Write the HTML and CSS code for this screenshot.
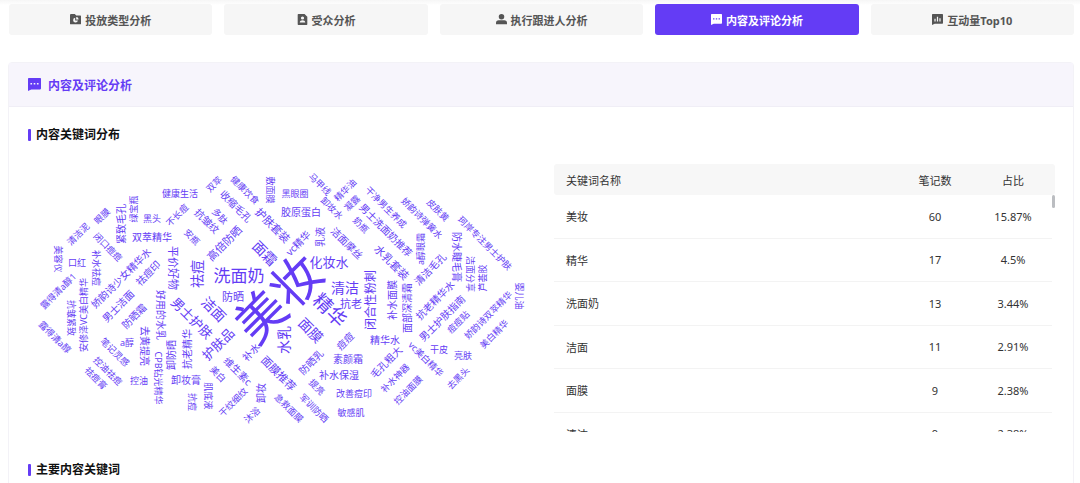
FILE: index.html
```html
<!DOCTYPE html>
<html lang="zh-CN">
<head>
    <meta charset="UTF-8">
    <meta name="viewport" content="width=device-width, initial-scale=1.0">
    <title>内容及评论分析</title>
    <link rel="stylesheet" href="styles.css">
</head>
<body>
    <nav class="tabs">
        <button class="tab" type="button">
            <svg class="tab-icon" viewBox="0 0 16 16"><path fill-rule="evenodd" d="M1.500 0H7l2 2h6a1 1 0 0 1 1 1v11a1 1 0 0 1-1 1H1a1 1 0 0 1-1-1V1.500A1.500 1.500 0 0 1 1.500 0zM7.500 5.500a3.500 3.500 0 1 0 4 4h-4zM9 4.500V8h3.500A3.500 3.500 0 0 0 9 4.500z"/></svg>
            投放类型分析
        </button>
        <button class="tab" type="button">
            <svg class="tab-icon" viewBox="0 0 16 16"><path fill-rule="evenodd" d="M2 0h9l4 4v11a1 1 0 0 1-1 1H2a1 1 0 0 1-1-1V1a1 1 0 0 1 1-1zM8 3.500a2.300 2.300 0 1 0 0 4.600 2.300 2.300 0 0 0 0-4.600zM4 12.500h8c0-4.500-8-4.500-8 0z"/></svg>
            受众分析
        </button>
        <button class="tab" type="button">
            <svg class="tab-icon" viewBox="0 0 16 16"><circle cx="8" cy="4" r="4"/><path d="M4 9h8a4 4 0 0 1 4 4v2H0v-2a4 4 0 0 1 4-4z"/></svg>
            执行跟进人分析
        </button>
        <button class="tab active" type="button">
            <svg class="tab-icon" viewBox="0 0 16 16"><path fill-rule="evenodd" d="M1 0h14a1 1 0 0 1 1 1v12a1 1 0 0 1-1 1H4l-4 2V1a1 1 0 0 1 1-1zM3 6v2h2V6zM7 6v2h2V6zM11 6v2h2V6z"/></svg>
            内容及评论分析
        </button>
        <button class="tab" type="button">
            <svg class="tab-icon" viewBox="0 0 16 16"><path fill-rule="evenodd" d="M1 0h14a1 1 0 0 1 1 1v12a1 1 0 0 1-1 1H4l-4 2V1a1 1 0 0 1 1-1zM3.500 7v4h1.800V7zM7.100 4v7h1.800V4zM10.700 6v5h1.800V6z"/></svg>
            互动量Top10
        </button>
    </nav>

    <section class="panel">
        <h2 class="panel-header">
            <svg class="panel-icon" viewBox="0 0 16 16"><path fill-rule="evenodd" d="M1 0h14a1 1 0 0 1 1 1v12a1 1 0 0 1-1 1H4l-4 2V1a1 1 0 0 1 1-1zM3 6v2h2V6zM7 6v2h2V6zM11 6v2h2V6z"/></svg>
            内容及评论分析
        </h2>

        <div class="panel-body">
            <h3 class="section-title">内容关键词分布</h3>
            <div class="keyword-row">
                <svg class="cloud" viewBox="-2 -1 501 266" role="img" aria-label="内容关键词分布">
                    <g class="w50"><text transform="translate(248 133) rotate(-45)">美妆</text></g>
                    <g class="w19"><text transform="translate(300 145) rotate(45)">精华</text></g>
                    <g class="w17"><text transform="translate(209 110)">洗面奶</text></g>
                    <g class="w14">
                        <text transform="translate(184 144) rotate(45)">洁面</text>
                        <text transform="translate(281 165) rotate(45)">面膜</text>
                        <text transform="translate(315 122)">清洁</text>
                        <text transform="translate(253 175) rotate(-90)">水乳</text>
                        <text transform="translate(235 88) rotate(45)">面霜</text>
                        <text transform="translate(166 109) rotate(-90)">祛痘</text>
                    </g>
                    <g class="w13">
                        <text transform="translate(299 97)">化妆水</text>
                        <text transform="translate(162 153) rotate(45)">男士护肤</text>
                        <text transform="translate(188 179) rotate(-45)">护肤品</text>
                    </g>
                    <g class="w12">
                        <text transform="translate(340 135) rotate(-90)">闭合性粉刺</text>
                    </g>
                    <g class="w11">
                        <text transform="translate(203 131)">防晒</text>
                        <text transform="translate(321 138)">抗老</text>
                        <text transform="translate(194 78) rotate(-45)">高倍防晒</text>
                        <text transform="translate(143 103) rotate(90)">平价好物</text>
                        <text transform="translate(243 60) rotate(45)">护肤套装</text>
                        <text transform="translate(362 97) rotate(45)">水乳套装</text>
                        <text transform="translate(249 208) rotate(45)">面膜推荐</text>
                    </g>
                    <g class="w10">
                        <text transform="translate(206 41) rotate(45)">收缩毛孔</text>
                        <text transform="translate(177 56) rotate(45)">抗皱纹</text>
                        <text transform="translate(122 72)">双萃精华</text>
                        <text transform="translate(271 47)">胶原蛋白</text>
                        <text transform="translate(290 72) rotate(-90)">乳液</text>
                        <text transform="translate(268 78) rotate(-45)">vc精华</text>
                        <text transform="translate(317 78) rotate(45)">洁面摩丝</text>
                        <text transform="translate(131 150) rotate(90)">好用的水乳</text>
                        <text transform="translate(115 181) rotate(90)">去黄提亮</text>
                        <text transform="translate(141 190) rotate(-90)">卸防晒</text>
                        <text transform="translate(157 184) rotate(-90)">抗老精华</text>
                        <text transform="translate(156 215)">卸妆膏</text>
                        <text transform="translate(208 206) rotate(45)">维生素c</text>
                        <text transform="translate(221 187) rotate(-45)">补水</text>
                        <text transform="translate(315 176) rotate(-45)">痘痘</text>
                        <text transform="translate(281 197) rotate(-45)">防晒乳</text>
                        <text transform="translate(318 194)">素颜霜</text>
                        <text transform="translate(309 210)">补水保湿</text>
                        <text transform="translate(231 228) rotate(-90)">卸妆</text>
                        <text transform="translate(355 175)">精华水</text>
                        <text transform="translate(362 135) rotate(-90)">补水面膜</text>
                        <text transform="translate(377 143) rotate(-90)">面部深清霜</text>
                        <text transform="translate(427 92) rotate(90)">防水睫毛膏</text>
                        <text transform="translate(91 113) rotate(-45)">娇韵诗少女精华水</text>
                        <text transform="translate(118 108) rotate(-45)">祛痘印</text>
                        <text transform="translate(356 65) rotate(45)">男士洗面奶推荐</text>
                        <text transform="translate(400 104) rotate(-45)">清洁毛孔</text>
                        <text transform="translate(104 151) rotate(-45)">防晒霜</text>
                        <text transform="translate(88 141) rotate(-45)">男士洁面</text>
                        <text transform="translate(405 135) rotate(-45)">抗老精华水</text>
                        <text transform="translate(412 153) rotate(-45)">男士护肤指南</text>
                        <text transform="translate(356 197) rotate(-45)">毛孔粗大</text>
                        <text transform="translate(91 59) rotate(-90)">紧致毛孔</text>
                    </g>
                    <g class="w9">
                        <text transform="translate(290 19) rotate(45)">马甲线</text>
                        <text transform="translate(315 25) rotate(-45)">精华油</text>
                        <text transform="translate(265 28)">黑眼圈</text>
                        <text transform="translate(240 25) rotate(90)">敷面膜</text>
                        <text transform="translate(215 25) rotate(45)">健康饮食</text>
                        <text transform="translate(184 19) rotate(-45)">双萃</text>
                        <text transform="translate(150 28)">健康生活</text>
                        <text transform="translate(190 51) rotate(45)">多肽</text>
                        <text transform="translate(147 50) rotate(-45)">不长痘</text>
                        <text transform="translate(162 72) rotate(45)">安瓶</text>
                        <text transform="translate(122 53)">黑头</text>
                        <text transform="translate(103 44) rotate(-90)">绿宝瓶</text>
                        <text transform="translate(72 51) rotate(-45)">眼膜</text>
                        <text transform="translate(48 69) rotate(-45)">清洁泥</text>
                        <text transform="translate(78 82) rotate(45)">闭口痘痘</text>
                        <text transform="translate(28 94) rotate(90)">美容仪</text>
                        <text transform="translate(47 97)">口红</text>
                        <text transform="translate(66 103) rotate(90)">补水祛痘</text>
                        <text transform="translate(302 43) rotate(45)">卸妆水</text>
                        <text transform="translate(322 38) rotate(-45)">凝露</text>
                        <text transform="translate(331 60) rotate(45)">奶瓶</text>
                        <text transform="translate(356 42) rotate(45)">干净男生养成</text>
                        <text transform="translate(392 53) rotate(45)">娇韵诗弹簧水</text>
                        <text transform="translate(408 45) rotate(45)">皮肤黄</text>
                        <text transform="translate(455 78) rotate(45)">珂岸专注男士护肤</text>
                        <text transform="translate(390 84) rotate(-90)">a醇眼霜</text>
                        <text transform="translate(440 109) rotate(90)">洁面分享</text>
                        <text transform="translate(452 113) rotate(-90)">芦荟胶</text>
                        <text transform="translate(489 131) rotate(90)">婴儿油</text>
                        <text transform="translate(128 213) rotate(90)">CPB钻光精华</text>
                        <text transform="translate(97 177)">a醇</text>
                        <text transform="translate(85 187) rotate(45)">笔记灵感</text>
                        <text transform="translate(41 153) rotate(90)">抗皱紧致</text>
                        <text transform="translate(53 150) rotate(-90)">安修泽VC美白精华</text>
                        <text transform="translate(28 126) rotate(-45)">露得清a醇1</text>
                        <text transform="translate(25 172) rotate(45)">露得清a醇</text>
                        <text transform="translate(78 206) rotate(45)">控油祛痘</text>
                        <text transform="translate(66 213) rotate(45)">祛痘膏</text>
                        <text transform="translate(109 215)">控油</text>
                        <text transform="translate(162 237) rotate(90)">抗痘</text>
                        <text transform="translate(178 231) rotate(90)">肌底液</text>
                        <text transform="translate(188 209) rotate(45)">美白</text>
                        <text transform="translate(287 222) rotate(45)">提亮</text>
                        <text transform="translate(324 228)">改善痘印</text>
                        <text transform="translate(321 247)">敏感肌</text>
                        <text transform="translate(284 243) rotate(45)">军训防晒</text>
                        <text transform="translate(259 243) rotate(45)">急救面膜</text>
                        <text transform="translate(203 237) rotate(-45)">干纹细纹</text>
                        <text transform="translate(222 250) rotate(-45)">沐浴</text>
                        <text transform="translate(428 157) rotate(-45)">痘痘贴</text>
                        <text transform="translate(458 150) rotate(-45)">娇韵诗双萃精华</text>
                        <text transform="translate(464 169) rotate(-45)">美白精华</text>
                        <text transform="translate(409 184)">干皮</text>
                        <text transform="translate(433 190)">亮肤</text>
                        <text transform="translate(396 194) rotate(45)">vc美白精华</text>
                        <text transform="translate(365 213) rotate(-45)">补水神器</text>
                        <text transform="translate(378 225) rotate(-45)">控油面膜</text>
                        <text transform="translate(428 213) rotate(-45)">去黑头</text>
                    </g>
                </svg>

                <div class="keyword-table">
                    <div class="table-head">
                        <table>
                            <thead>
                                <tr><th class="name">关键词名称</th><th>笔记数</th><th>占比</th></tr>
                            </thead>
                        </table>
                    </div>
                    <div class="table-body">
                        <table>
                            <tbody>
                                <tr><td class="name">美妆</td><td>60</td><td>15.87%</td></tr>
                                <tr><td class="name">精华</td><td>17</td><td>4.5%</td></tr>
                                <tr><td class="name">洗面奶</td><td>13</td><td>3.44%</td></tr>
                                <tr><td class="name">洁面</td><td>11</td><td>2.91%</td></tr>
                                <tr><td class="name">面膜</td><td>9</td><td>2.38%</td></tr>
                                <tr><td class="name">清洁</td><td>9</td><td>2.38%</td></tr>
                            </tbody>
                        </table>
                        <span class="scroll-thumb"></span>
                    </div>
                </div>
            </div>

            <h3 class="section-title">主要内容关键词</h3>
        </div>
    </section>
</body>
</html>
```
FILE: styles.css
```css
* {
    box-sizing: border-box;
}
html {
    scrollbar-width: none;
}
body {
    margin: 0;
    padding: 4px 6px 0 8px;
    font-family: "Noto Sans", "Noto Sans CJK SC", sans-serif;
    font-size: 11px;
    color: #333;
    background: linear-gradient(#f6f6f6, #fff 5px) no-repeat #fff;
}
h2, h3 {
    margin: 0;
}

/* tabs */
.tabs {
    display: flex;
    gap: 12px;
    margin-left: 1px;
}
.tab {
    flex: 1;
    display: flex;
    align-items: center;
    justify-content: center;
    gap: 4px;
    height: 31px;
    padding: 0;
    border: none;
    border-radius: 3px;
    background: #f6f6f6;
    color: #555;
    font-family: inherit;
    font-size: 11px;
    font-weight: bold;
    cursor: pointer;
}
.tab.active {
    background: #643cf5;
    color: #fff;
}
.tab-icon {
    width: 11px;
    height: 11px;
    fill: currentColor;
}

/* panel */
.panel {
    margin-top: 27px;
    border: 1px solid #f3f2f7;
    border-radius: 4px;
}
.panel-header {
    display: flex;
    align-items: center;
    gap: 7px;
    height: 44px;
    padding: 0 19px;
    background: #f7f5fc;
    border-bottom: 1px solid #f0eef6;
    color: #643cf5;
    font-size: 12px;
}
.panel-icon {
    width: 13px;
    height: 13px;
    fill: currentColor;
}
.panel-body {
    padding: 18px 18px 28px 19px;
}
.section-title {
    display: flex;
    align-items: center;
    gap: 5px;
    color: #111;
    font-size: 12px;
    line-height: 20px;
}
.section-title::before {
    content: "";
    width: 3px;
    height: 12px;
    border-radius: 1px;
    background: #643cf5;
}
.keyword-row {
    display: grid;
    grid-template-columns: 1fr 1fr;
    gap: 25px;
    margin: 19px 0 28px;
}

/* word cloud */
.cloud {
    width: 100%;
    fill: #643cf5;
    text-anchor: middle;
    dominant-baseline: central;
}
.w50 { font-size: 50px; }
.w19 { font-size: 19px; }
.w17 { font-size: 17px; }
.w14 { font-size: 14px; }
.w13 { font-size: 13px; }
.w12 { font-size: 12px; }
.w11 { font-size: 11px; }
.w10 { font-size: 10px; }
.w9 { font-size: 9px; }

/* table */
.table-head {
    padding-right: 3px;
    border-radius: 3px;
    background: #f7f7f7;
}
.table-body {
    position: relative;
    height: 237px;
    padding-right: 3px;
    overflow: hidden;
}
table {
    width: 100%;
    table-layout: fixed;
    border-collapse: separate;
    border-spacing: 0;
}
.table-body table {
    height: 261px;
}
th, td {
    width: 78px;
    padding: 0;
    text-align: center;
    font-weight: normal;
}
th {
    height: 31px;
}
td {
    border-bottom: 1px solid #f3f3f3;
}
.name {
    width: auto;
    padding-left: 12px;
    text-align: left;
}
.scroll-thumb {
    position: absolute;
    top: 0;
    right: 0;
    width: 3px;
    height: 13px;
    border-radius: 2px;
    background: #bbbdc1;
}
```
